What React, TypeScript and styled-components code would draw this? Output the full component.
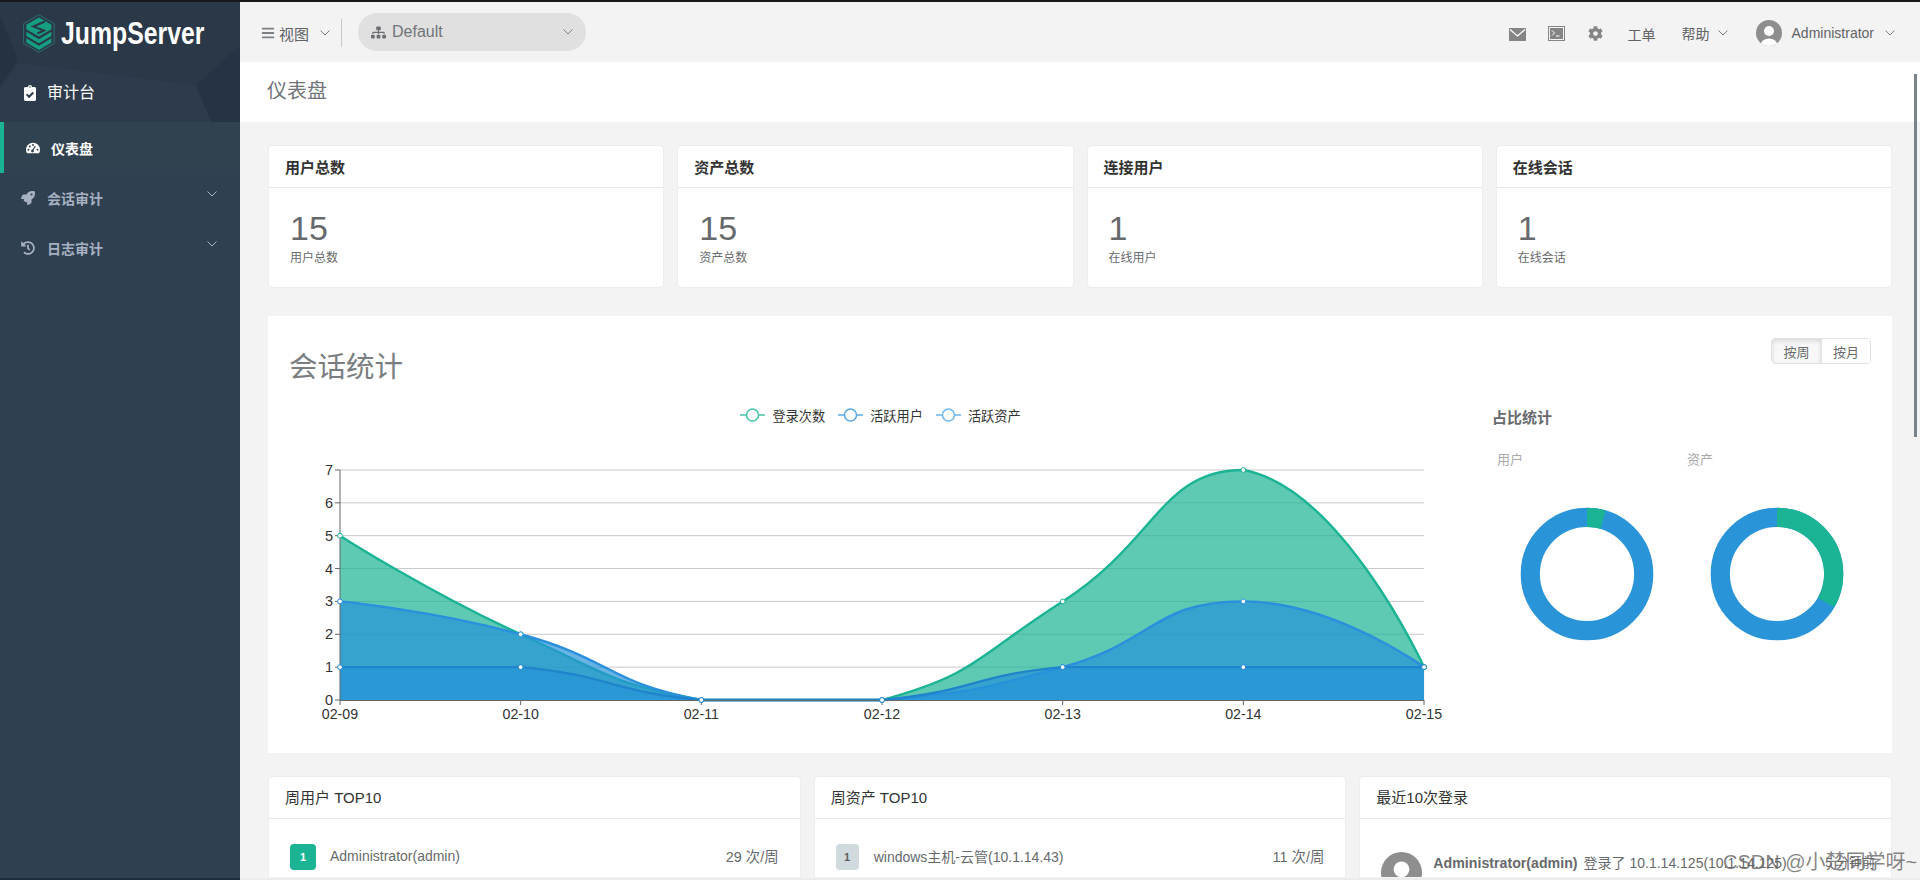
import React from "react";
import styled, { createGlobalStyle } from "styled-components";
import {
  FaBars,
  FaClipboardCheck,
  FaCog,
  FaHistory,
  FaRocket,
  FaSitemap,
} from "react-icons/fa";

const GlobalStyle = createGlobalStyle`
  html, body {
    margin: 0;
    padding: 0;
    height: 880px;
    overflow: hidden;
    background: #f3f3f3;
    font-family: "Liberation Sans", "Noto Sans CJK SC", sans-serif;
    color: #676a6c;
  }
  * { box-sizing: border-box; }
`;

const Page = styled.div`
  width: 1920px;
  height: 880px;
  display: flex;
  flex-direction: column;
  overflow: hidden;
`;

const TopLine = styled.div`
  height: 2px;
  flex: none;
  background: #16181c;
`;

const Row = styled.div`
  flex: 1;
  min-height: 0;
  display: flex;
`;

const BottomEdge = styled.div`
  height: 2px;
  flex: none;
  display: flex;
  background: #ececec;
  &::before {
    content: "";
    width: 240px;
    background: #1f2d3a;
  }
`;

/* sidebar */
const Sidebar = styled.aside`
  width: 240px;
  flex: none;
  background: #2f4050;
`;

const SideHead = styled.div`
  position: relative;
  height: 120px;
  background: #2a3848;
  overflow: hidden;
`;

const Facets = styled.svg`
  position: absolute;
  inset: 0;
`;

const LogoRow = styled.div`
  position: relative;
  display: flex;
  align-items: center;
  padding: 11px 0 0 23px;
  height: 52px;
`;

const LogoText = styled.span`
  margin-left: 6px;
  font-size: 31px;
  font-weight: 700;
  color: #fff;
  transform: scaleX(0.8);
  transform-origin: left center;
  line-height: 40px;
`;

const SideTitle = styled.div`
  position: relative;
  display: flex;
  align-items: center;
  gap: 9px;
  padding: 27px 0 0 22px;
  color: #fff;
  font-size: 16px;
  line-height: 24px;
`;

const NavItem = styled.div<{ $active?: boolean }>`
  display: flex;
  align-items: center;
  height: ${(p) => (p.$active ? 51 : 50)}px;
  padding-left: 22px;
  border-left: ${(p) => (p.$active ? "4px solid #1ab394" : "none")};
  background: ${(p) => (p.$active ? "#30414f" : "transparent")};
  color: ${(p) => (p.$active ? "#fff" : "#a7b1c2")};
  font-size: 14px;
  font-weight: 700;
  padding-top: ${(p) => (p.$active ? 1 : 0)}px;
  padding-bottom: ${(p) => (p.$active ? 0 : 1)}px;
`;

const NavIcon = styled.span<{ $active?: boolean }>`
  display: flex;
  justify-content: center;
  width: 14px;
  margin-left: ${(p) => (p.$active ? 0 : -1)}px;
  margin-right: ${(p) => (p.$active ? 11 : 12)}px;
`;

const NavChevron = styled.span`
  margin-left: auto;
  margin-right: 23px;
  margin-top: -7px;
  display: flex;
`;

/* main */
const Main = styled.main`
  position: relative;
  flex: 1;
  min-width: 0;
  display: flex;
  flex-direction: column;
  overflow: hidden;
  padding-bottom: 1px;
`;

const ScrollThumb = styled.div`
  position: absolute;
  right: 3px;
  top: 72px;
  width: 3px;
  height: 363px;
  background: #78838b;
`;

const TopBar = styled.header`
  height: 60px;
  flex: none;
  display: flex;
  align-items: center;
  padding: 2px 25px 0 21px;
  background: #f3f3f3;
  font-size: 14px;
  color: #606266;
`;

const ViewMenu = styled.div`
  display: flex;
  align-items: center;
  font-size: 15px;
  gap: 4px;
`;

const Divider = styled.span`
  width: 1px;
  height: 28px;
  margin: 0 16px 0 11px;
  background: #c8c8c8;
`;

const OrgSelect = styled.div`
  width: 228px;
  height: 38px;
  margin-top: -2px;
  display: flex;
  align-items: center;
  gap: 6px;
  padding: 0 13px;
  border-radius: 19px;
  background: #e0e0e0;
  font-size: 16px;
  color: #71757a;
`;

const OrgChevron = styled.span`
  margin-left: auto;
  display: flex;
`;

const TopItem = styled.div<{ $ml: number }>`
  display: flex;
  align-items: center;
  gap: 8px;
  margin-left: ${(p) => p.$ml}px;
  font-size: 14px;
  color: #606266;
`;

const TicketLink = styled.span`
  padding-top: 2px;
`;

const UserName = styled.span`
  margin-left: 2px;
`;

const UserChevron = styled.span`
  margin-left: 3px;
  display: flex;
`;

const RightSpacer = styled.div`
  flex: 1;
`;

const Scroll = styled.div`
  flex: 1;
  min-height: 0;
  overflow: hidden;
`;

const PageHead = styled.div`
  height: 60px;
  padding: 0 27px 6px;
  display: flex;
  align-items: center;
  background: #fff;
  font-size: 20px;
  color: #71757a;
`;

const Content = styled.div`
  padding: 23px 28px 0;
`;

const StatGrid = styled.div`
  display: grid;
  grid-template-columns: repeat(4, 1fr);
  gap: 13px;
`;

const Card = styled.section`
  background: #fff;
  border: 1px solid #ebedf0;
  border-radius: 4px;
  overflow: hidden;
`;

const CardHead = styled.div<{ $bold?: boolean }>`
  height: 42px;
  padding: 0 16px ${(p) => (p.$bold ? 0 : 2)}px;
  display: flex;
  align-items: center;
  border-bottom: 1px solid #e7eaec;
  font-size: 15px;
  font-weight: ${(p) => (p.$bold ? 700 : 400)};
  color: #333;
`;

const StatBody = styled.div`
  padding: 22px 21px 20px;
`;

const StatNumber = styled.div`
  font-size: 34px;
  line-height: 36px;
  color: #676a6c;
`;

const StatLabel = styled.div`
  margin-top: 3px;
  font-size: 12px;
  line-height: 18px;
  color: #676a6c;
`;

const Panel = styled.section`
  height: 437px;
  margin-top: 28px;
  padding: 22px 21px 0;
  background: #fff;
`;

const PanelHead = styled.div`
  height: 62px;
  display: flex;
  justify-content: space-between;
  align-items: flex-start;
`;

const PanelTitle = styled.h2`
  margin: 11px 0 0;
  font-size: 28.5px;
  line-height: 36px;
  font-weight: 400;
  color: #7b7e80;
`;

const Toggle = styled.div`
  display: flex;
  height: 26px;
  border: 1px solid #e0e3e6;
  border-radius: 4px;
  overflow: hidden;
`;

const ToggleBtn = styled.span<{ $on?: boolean }>`
  width: 49px;
  display: flex;
  align-items: center;
  justify-content: center;
  font-size: 13px;
  color: #676a6c;
  background: ${(p) => (p.$on ? "#f8f8f8" : "#fff")};
  box-shadow: ${(p) => (p.$on ? "inset 0 2px 5px rgba(0,0,0,.14)" : "none")};
  & + & {
    border-left: 1px solid #e0e3e6;
  }
`;

const PanelBody = styled.div`
  display: flex;
`;

const ChartCol = styled.div`
  width: 1186px;
  flex: none;
`;

const Legend = styled.div`
  height: 32px;
  padding: 0 3px 2px 0;
  display: flex;
  justify-content: center;
  align-items: center;
  gap: 13px;
`;

const LegendItem = styled.span`
  display: flex;
  align-items: center;
  gap: 7px;
  font-size: 13.2px;
  color: #333;
`;

const ChartSvg = styled.svg`
  display: block;
`;

const RatioCol = styled.div`
  margin-left: 17px;
  width: 380px;
`;

const RatioTitle = styled.div`
  margin-top: 8px;
  font-size: 15px;
  line-height: 20px;
  font-weight: 700;
  color: #676a6c;
`;

const RatioGrid = styled.div`
  margin-top: 22px;
  display: grid;
  grid-template-columns: 190px 190px;
`;

const RatioCell = styled.div`
  display: flex;
  flex-direction: column;
`;

const RatioLabel = styled.div`
  padding-left: 5px;
  margin-bottom: 34px;
  font-size: 13px;
  line-height: 20px;
  color: #aaa;
`;

const DonutSvg = styled.svg`
  align-self: center;
`;

const BottomGrid = styled.div`
  margin-top: 23px;
  display: grid;
  grid-template-columns: repeat(3, 1fr);
  gap: 13px;
  & > section {
    height: 200px;
  }
`;

const TopRow = styled.div`
  display: flex;
  align-items: center;
  padding: 25px 21px 0 21px;
  font-size: 14px;
  color: #676a6c;
`;

const Badge = styled.span<{ $first?: boolean }>`
  width: ${(p) => (p.$first ? 26 : 23)}px;
  height: 26px;
  margin-right: ${(p) => (p.$first ? 14 : 15)}px;
  flex: none;
  display: flex;
  align-items: center;
  justify-content: center;
  border-radius: 4px;
  background: ${(p) => (p.$first ? "#1ab394" : "#d1dade")};
  color: ${(p) => (p.$first ? "#fff" : "#5e5e5e")};
  font-size: 11px;
  font-weight: 700;
`;

const TopName = styled.span<{ $up: number }>`
  margin-top: -${(p) => p.$up}px;
`;

const Count = styled.span`
  margin-left: auto;
  margin-top: -3px;
  font-size: 14.4px;
`;

const LoginRow = styled.div`
  display: flex;
  gap: 11px;
  padding: 33px 16px 0 21px;
  font-size: 14px;
  line-height: 20px;
  color: #676a6c;
  white-space: nowrap;
`;

const LoginText = styled.div`
  flex: 1;
  display: flex;
  gap: 6px;
  padding-top: 1px;
  & b {
    font-size: 14.2px;
  }
`;

const Time = styled.span`
  margin-left: auto;
  font-size: 13px;
`;

const Watermark = styled.div`
  position: absolute;
  left: 1483px;
  top: 846px;
  font-size: 20px;
  line-height: 28px;
  color: rgba(100, 100, 100, 0.78);
  white-space: nowrap;
  pointer-events: none;
`;

/* drawings */
const Chevron = ({ color = "#7d8083" }: { color?: string }) => (
  <svg width="10" height="6" viewBox="0 0 10 6">
    <polyline points="0.5,0.5 5,5 9.5,0.5" fill="none" stroke={color} strokeWidth="1" />
  </svg>
);

const Logo = () => (
  <svg width="32" height="39" viewBox="0 0 32 39">
    <path d="M16 .6 31.4 9.6v19.8L16 38.4.6 29.4V9.6Z" fill="none" stroke="#2c6f72" strokeWidth="1" />
    <path d="M16 3.4 28.6 10.8v4.4L16 22.6 3.4 15.2v-4.4Z" fill="#159f80" />
    <path d="M22 7.5 10.5 12.5 21 16.5 14.5 19.5" fill="none" stroke="#2a3848" strokeWidth="2.2" />
    <path d="M3.4 17.8 16 25.2l12.6-7.4v4.2L16 29.4 3.4 22Z" fill="#159f80" />
    <path d="M3.4 24.4 16 31.8l12.6-7.4v4.2L16 36 3.4 28.6Z" fill="#159f80" />
  </svg>
);

const Gauge = () => (
  <svg width="15" height="12" viewBox="0 0 16 12">
    <path d="M8 0C3.6 0 0 3.6 0 8c0 1.5.4 2.9 1.2 4h13.6c.8-1.1 1.2-2.5 1.2-4 0-4.4-3.6-8-8-8Z" fill="#fff" />
    <circle cx="2.8" cy="8" r="1.1" fill="#30414f" />
    <circle cx="4.3" cy="4.2" r="1.1" fill="#30414f" />
    <circle cx="8" cy="2.6" r="1.1" fill="#30414f" />
    <circle cx="13.2" cy="8" r="1.1" fill="#30414f" />
    <path d="M7.4 9 10.6 3.6" stroke="#30414f" strokeWidth="1.2" />
    <circle cx="7.4" cy="9.4" r="1.6" fill="#30414f" />
  </svg>
);

const EnvelopeSvg = styled.svg`
  margin-top: 2px;
`;

const Envelope = () => (
  <EnvelopeSvg width="17" height="13" viewBox="0 0 17 13">
    <rect width="17" height="13" fill="#858585" />
    <polyline points="1,1.5 8.5,8 16,1.5" fill="none" stroke="#fff" strokeWidth="1.3" />
  </EnvelopeSvg>
);

const Terminal = () => (
  <svg width="17" height="15" viewBox="0 0 17 15">
    <rect x="0.5" y="0.5" width="16" height="14" fill="#f3f3f3" stroke="#858585" />
    <rect x="2" y="2" width="13" height="11" fill="#858585" />
    <polyline points="4,4.5 6.5,7 4,9.5" fill="none" stroke="#fff" strokeWidth="1" />
    <path d="M8 10h3.5" stroke="#fff" strokeWidth="1" />
  </svg>
);

const AvatarSvg = styled.svg`
  flex: none;
`;

const Avatar = ({ size }: { size: number }) => (
  <AvatarSvg width={size} height={size} viewBox="0 0 26 26">
    <defs>
      <clipPath id={`av${size}`}>
        <circle cx="13" cy="13" r="13" />
      </clipPath>
    </defs>
    <circle cx="13" cy="13" r="13" fill="#8e8e8e" />
    <g clipPath={`url(#av${size})`}>
      <circle cx="13" cy="11" r="5" fill="#fff" />
      <ellipse cx="13" cy="25" rx="8.5" ry="6.5" fill="#fff" />
    </g>
  </AvatarSvg>
);

const Donut = ({ deg }: { deg: number }) => {
  const r = 56.7;
  const c = 2 * Math.PI * r;
  return (
    <DonutSvg width="140" height="140" viewBox="0 0 140 140">
      <circle cx="70" cy="70" r={r} fill="none" stroke="#2a94d9" strokeWidth="19.2" />
      <circle
        cx="70"
        cy="70"
        r={r}
        fill="none"
        stroke="#1ab394"
        strokeWidth="19.2"
        strokeDasharray={`${(c * deg) / 360} ${c}`}
        transform="rotate(-90 70 70)"
      />
    </DonutSvg>
  );
};

/* chart */
type Pt = [number, number];

const X0 = 51;
const Y0 = 268;
const STEP_X = 180.67;
const STEP_Y = 32.86;
const DAYS = ["02-09", "02-10", "02-11", "02-12", "02-13", "02-14", "02-15"];

const SERIES = [
  { data: [5, 2, 0, 0, 3, 7, 1], line: "#1ab394", fill: "#1ab394" },
  { data: [3, 2, 0, 0, 1, 3, 1], line: "#2a8fdc", fill: "#2593d8" },
  { data: [1, 1, 0, 0, 1, 1, 1], line: "#1f84cb", fill: "#2593d8" },
];

const toPts = (data: number[]): Pt[] =>
  data.map((v, i) => [X0 + i * STEP_X, Y0 - v * STEP_Y]);

// same smoothing as an echarts line with smooth: true
const smoothPath = (pts: Pt[]) => {
  const xs = pts.map((p) => p[0]);
  const ys = pts.map((p) => p[1]);
  const clamp = (p: Pt): Pt => [
    Math.min(Math.max(p[0], Math.min(...xs)), Math.max(...xs)),
    Math.min(Math.max(p[1], Math.min(...ys)), Math.max(...ys)),
  ];
  const cps: Pt[][] = pts.map((p, i) => {
    if (i === 0 || i === pts.length - 1) return [p, p];
    const prev = pts[i - 1];
    const next = pts[i + 1];
    const vx = (next[0] - prev[0]) * 0.5;
    const vy = (next[1] - prev[1]) * 0.5;
    const d0 = Math.hypot(p[0] - prev[0], p[1] - prev[1]);
    const d1 = Math.hypot(next[0] - p[0], next[1] - p[1]);
    const sum = d0 + d1;
    return [
      clamp([p[0] - (vx * d0) / sum, p[1] - (vy * d0) / sum]),
      clamp([p[0] + (vx * d1) / sum, p[1] + (vy * d1) / sum]),
    ];
  });
  let d = `M${pts[0][0]} ${pts[0][1]}`;
  for (let i = 1; i < pts.length; i++) {
    const a = cps[i - 1][1];
    const b = cps[i][0];
    d += `C${a[0]} ${a[1]} ${b[0]} ${b[1]} ${pts[i][0]} ${pts[i][1]}`;
  }
  return d;
};

const AreaChart = () => {
  const right = X0 + 6 * STEP_X;
  return (
    <ChartSvg width="1186" height="321" viewBox="0 0 1186 321">
      {[1, 2, 3, 4, 5, 6, 7].map((v) => (
        <line key={v} x1={X0} x2={right} y1={Y0 - v * STEP_Y} y2={Y0 - v * STEP_Y} stroke="#c8c8c8" />
      ))}
      {SERIES.map((s, i) => {
        const pts = toPts(s.data);
        const d = smoothPath(pts);
        return (
          <g key={i}>
            <path d={`${d}L${right} ${Y0}L${X0} ${Y0}Z`} fill={s.fill} opacity="0.7" />
            <path d={d} fill="none" stroke={s.line} strokeWidth="2.4" />
          </g>
        );
      })}
      <line x1={X0} x2={X0} y1={Y0 - 7 * STEP_Y} y2={Y0} stroke="#666" />
      <line x1={X0} x2={right} y1={Y0 + 0.5} y2={Y0 + 0.5} stroke="#666" />
      {[0, 1, 2, 3, 4, 5, 6, 7].map((v) => (
        <g key={v}>
          <line x1={X0 - 5} x2={X0} y1={Y0 - v * STEP_Y} y2={Y0 - v * STEP_Y} stroke="#666" />
          <text
            x={X0 - 7}
            y={Y0 - v * STEP_Y + 5}
            textAnchor="end"
            fontSize="14.5"
            fill="#333"
          >
            {v}
          </text>
        </g>
      ))}
      {DAYS.map((day, i) => (
        <g key={day}>
          <line
            x1={X0 + i * STEP_X}
            x2={X0 + i * STEP_X}
            y1={Y0}
            y2={Y0 + 5}
            stroke="#666"
          />
          <text
            x={X0 + i * STEP_X}
            y={Y0 + 19}
            textAnchor="middle"
            fontSize="14.2"
            fill="#333"
          >
            {day}
          </text>
        </g>
      ))}
      {SERIES.map((s, i) =>
        toPts(s.data).map((p, j) => (
          <circle
            key={`${i}-${j}`}
            cx={p[0]}
            cy={p[1]}
            r="2.4"
            fill="#fff"
            stroke={s.line}
            strokeWidth="1"
          />
        ))
      )}
    </ChartSvg>
  );
};

const LegendIcon = ({ color }: { color: string }) => (
  <svg width="25" height="14" viewBox="0 0 25 14">
    <line x1="0" x2="25" y1="7" y2="7" stroke={color} strokeWidth="1.5" />
    <circle cx="12.5" cy="7" r="6" fill="#fff" stroke={color} strokeWidth="1.5" />
  </svg>
);

const STATS = [
  { title: "用户总数", value: 15, label: "用户总数" },
  { title: "资产总数", value: 15, label: "资产总数" },
  { title: "连接用户", value: 1, label: "在线用户" },
  { title: "在线会话", value: 1, label: "在线会话" },
];

const LEGEND = [
  { name: "登录次数", color: "#43c4a9" },
  { name: "活跃用户", color: "#57a9e5" },
  { name: "活跃资产", color: "#6db6ee" },
];

const App: React.FC = () => {
  return (
    <Page>
      <GlobalStyle />
      <TopLine />
      <Row>
        <Sidebar>
          <SideHead>
            <Facets width="240" height="120" viewBox="0 0 240 120">
              <path d="M0 14 18 58 0 84Z" fill="#243242" />
              <path d="M20 61 196 83 211 120H0V86Z" fill="#2d3b4c" />
              <path d="M240 44 196 83 211 120H240Z" fill="#253344" />
            </Facets>
            <LogoRow>
              <Logo />
              <LogoText>JumpServer</LogoText>
            </LogoRow>
            <SideTitle>
              <FaClipboardCheck size={16} />
              审计台
            </SideTitle>
          </SideHead>
          <NavItem $active>
            <NavIcon $active>
              <Gauge />
            </NavIcon>
            仪表盘
          </NavItem>
          <NavItem>
            <NavIcon>
              <FaRocket size={14} />
            </NavIcon>
            会话审计
            <NavChevron>
              <Chevron color="#a7b1c2" />
            </NavChevron>
          </NavItem>
          <NavItem>
            <NavIcon>
              <FaHistory size={14} />
            </NavIcon>
            日志审计
            <NavChevron>
              <Chevron color="#a7b1c2" />
            </NavChevron>
          </NavItem>
        </Sidebar>
        <Main>
          <TopBar>
            <ViewMenu>
              <FaBars size={14} color="#7d8083" />
              视图
            </ViewMenu>
            <TopItem $ml={11}>
              <Chevron />
            </TopItem>
            <Divider />
            <OrgSelect>
              <FaSitemap size={15} color="#6b6e72" />
              Default
              <OrgChevron>
                <Chevron />
              </OrgChevron>
            </OrgSelect>
            <RightSpacer />
            <TopItem $ml={0}>
              <Envelope />
            </TopItem>
            <TopItem $ml={22}>
              <Terminal />
            </TopItem>
            <TopItem $ml={23}>
              <FaCog size={15} color="#858585" />
            </TopItem>
            <TopItem $ml={25}>
              <TicketLink>工单</TicketLink>
            </TopItem>
            <TopItem $ml={26}>
              帮助
              <Chevron />
            </TopItem>
            <TopItem $ml={28}>
              <Avatar size={26} />
              <UserName>Administrator</UserName>
              <UserChevron>
                <Chevron />
              </UserChevron>
            </TopItem>
          </TopBar>
          <Scroll>
            <PageHead>仪表盘</PageHead>
            <Content>
              <StatGrid>
                {STATS.map((s) => (
                  <Card key={s.title}>
                    <CardHead $bold>{s.title}</CardHead>
                    <StatBody>
                      <StatNumber>{s.value}</StatNumber>
                      <StatLabel>{s.label}</StatLabel>
                    </StatBody>
                  </Card>
                ))}
              </StatGrid>
              <Panel>
                <PanelHead>
                  <PanelTitle>会话统计</PanelTitle>
                  <Toggle>
                    <ToggleBtn $on>按周</ToggleBtn>
                    <ToggleBtn>按月</ToggleBtn>
                  </Toggle>
                </PanelHead>
                <PanelBody>
                  <ChartCol>
                    <Legend>
                      {LEGEND.map((l) => (
                        <LegendItem key={l.name}>
                          <LegendIcon color={l.color} />
                          {l.name}
                        </LegendItem>
                      ))}
                    </Legend>
                    <AreaChart />
                  </ChartCol>
                  <RatioCol>
                    <RatioTitle>占比统计</RatioTitle>
                    <RatioGrid>
                      <RatioCell>
                        <RatioLabel>用户</RatioLabel>
                        <Donut deg={16.5} />
                      </RatioCell>
                      <RatioCell>
                        <RatioLabel>资产</RatioLabel>
                        <Donut deg={120} />
                      </RatioCell>
                    </RatioGrid>
                  </RatioCol>
                </PanelBody>
              </Panel>
              <BottomGrid>
                <Card>
                  <CardHead>周用户 TOP10</CardHead>
                  <TopRow>
                    <Badge $first>1</Badge>
                    <TopName $up={2}>Administrator(admin)</TopName>
                    <Count>29 次/周</Count>
                  </TopRow>
                </Card>
                <Card>
                  <CardHead>周资产 TOP10</CardHead>
                  <TopRow>
                    <Badge>1</Badge>
                    <TopName $up={3}>windows主机-云管(10.1.14.43)</TopName>
                    <Count>11 次/周</Count>
                  </TopRow>
                </Card>
                <Card>
                  <CardHead>最近10次登录</CardHead>
                  <LoginRow>
                    <Avatar size={41} />
                    <LoginText>
                      <b>Administrator(admin)</b>
                      <span>登录了 10.1.14.125(10.1.14.125)</span>
                      <Time>5 分钟前</Time>
                    </LoginText>
                  </LoginRow>
                </Card>
              </BottomGrid>
            </Content>
          </Scroll>
          <ScrollThumb />
          <Watermark>CSDN @小楚同学呀~</Watermark>
        </Main>
      </Row>
      <BottomEdge />
    </Page>
  );
};

export default App;
